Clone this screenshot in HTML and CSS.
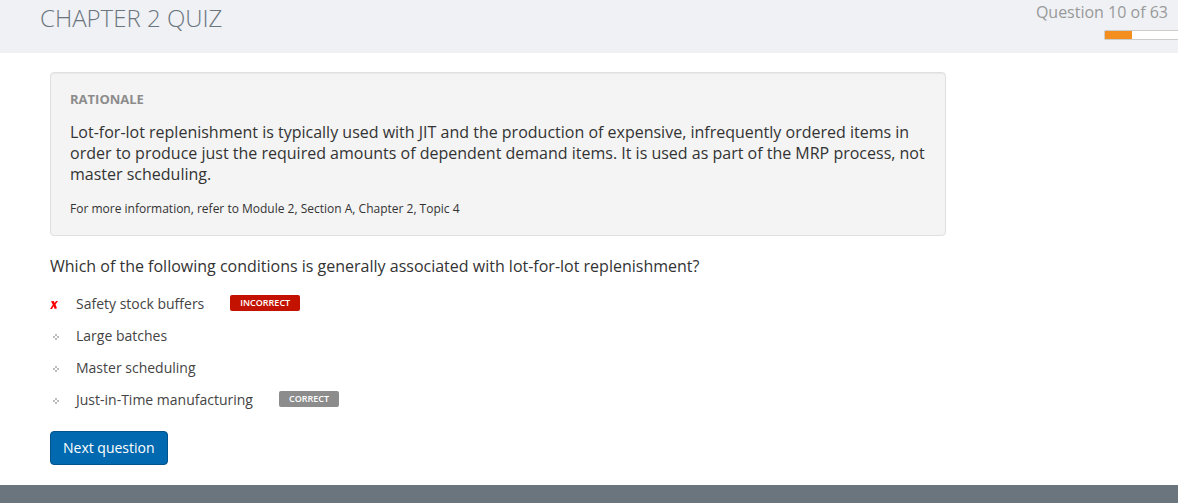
FILE: index.html
```html
<!DOCTYPE html>
<html lang="en">
<head>
<meta charset="utf-8">
<meta name="viewport" content="width=device-width, initial-scale=1">
<title>Chapter 2 Quiz</title>
<link rel="stylesheet" href="styles.css">
</head>
<body>
<header class="quiz-header">
  <h1 class="quiz-title">CHAPTER 2 QUIZ</h1>
  <div class="quiz-status">
    <p class="quiz-count">Question 10 of 63</p>
    <div class="progress" role="progressbar" aria-label="Quiz progress" aria-valuemin="0" aria-valuemax="63" aria-valuenow="10"><div class="progress-fill"></div></div>
  </div>
</header>
<main class="quiz-main">
  <section class="rationale">
    <h2 class="rationale-title">RATIONALE</h2>
    <p class="rationale-text">Lot-for-lot replenishment is typically used with JIT and the production of expensive, infrequently ordered items in order to produce just the required amounts of dependent demand items. It is used as part of the MRP process, not master scheduling.</p>
    <p class="rationale-note">For more information, refer to Module 2, Section A, Chapter 2, Topic 4</p>
  </section>
  <p class="question">Which of the following conditions is generally associated with lot-for-lot replenishment?</p>
  <ul class="answers">
    <li class="answer">
      <svg class="mark" viewBox="0 0 10 10" aria-hidden="true"><path d="M1 2.2 3.8 2 4.7 4 6 2H8L5.5 5.5 7 9.2 4.7 10 3.6 7.3 2 10H0L2.8 5.8Z" fill="#f00"/></svg>
      <span class="answer-text">Safety stock buffers</span>
      <span class="badge badge-incorrect">INCORRECT</span>
    </li>
    <li class="answer">
      <svg class="mark" viewBox="0 0 10 10" aria-hidden="true"><path d="M5 3h2v2H5zM3 5h2v2H3zM7 5h2v2H7zM5 7h2v2H5z" fill="#bbb"/></svg>
      <span class="answer-text">Large batches</span>
    </li>
    <li class="answer">
      <svg class="mark" viewBox="0 0 10 10" aria-hidden="true"><path d="M5 3h2v2H5zM3 5h2v2H3zM7 5h2v2H7zM5 7h2v2H5z" fill="#bbb"/></svg>
      <span class="answer-text">Master scheduling</span>
    </li>
    <li class="answer">
      <svg class="mark" viewBox="0 0 10 10" aria-hidden="true"><path d="M5 3h2v2H5zM3 5h2v2H3zM7 5h2v2H7zM5 7h2v2H5z" fill="#bbb"/></svg>
      <span class="answer-text">Just-in-Time manufacturing</span>
      <span class="badge badge-correct">CORRECT</span>
    </li>
  </ul>
  <button class="next" type="button">Next question</button>
</main>
<footer class="quiz-footer"></footer>
</body>
</html>
```
FILE: styles.css
```css
* { box-sizing: border-box; }

body {
  margin: 0;
  min-height: 100vh;
  display: flex;
  flex-direction: column;
  overflow-x: hidden;
  background: #fff;
  color: #333;
  font: 14px/20px "Open Sans", sans-serif;
}

h1, h2, p, ul { margin: 0; padding: 0; }

.quiz-header {
  display: flex;
  justify-content: space-between;
  align-items: flex-start;
  padding: 2px 0 13px 40px;
  background: #eff1f5;
}

.quiz-title {
  color: #6b757d;
  font-size: 24px;
  font-weight: 300;
  line-height: 32px;
}

.quiz-status {
  display: flex;
  flex-direction: column;
  align-items: flex-end;
  gap: 8px;
}

.quiz-count {
  padding-right: 10px;
  color: #999;
  font-size: 16px;
  line-height: 20px;
}

.progress {
  width: 74px;
  height: 10px;
  border: 1px solid #ccc;
  border-right: 0;
  border-radius: 2px 0 0 2px;
  background: #fff;
}

.progress-fill {
  width: 27px;
  height: 100%;
  background: #f48f1f;
}

.quiz-main {
  flex: 1;
  padding: 19px 50px 20px;
}

.rationale {
  max-width: 896px;
  padding: 16px 19px;
  border: 1px solid #e0e0e0;
  border-radius: 4px;
  background: #f4f4f4;
  box-shadow: inset 0 1px 1px rgba(0, 0, 0, 0.05);
}

.rationale-title {
  margin-bottom: 13px;
  color: #8c8c8c;
  font-size: 13px;
  font-weight: 700;
  line-height: 20px;
}

.rationale-text {
  margin-bottom: 14px;
  font-size: 16px;
  line-height: 21px;
}

.rationale-note {
  font-size: 12px;
  line-height: 20px;
}

.question {
  margin: 20px 0 17px;
  font-size: 16px;
  line-height: 21px;
}

.answers {
  display: flex;
  flex-direction: column;
  gap: 12px;
  list-style: none;
}

.answer {
  display: flex;
  align-items: center;
  color: #444;
}

.mark {
  width: 10px;
  height: 10px;
  margin-right: 16px;
}

.badge {
  margin: 0 0 2px 26px;
  padding: 0 10px;
  border-radius: 2px;
  color: #fff;
  font-size: 9px;
  font-weight: 600;
  line-height: 16px;
}

.badge-incorrect { background: #c41200; }
.badge-correct { background: #8c8c8c; }

.next {
  margin-top: 21px;
  padding: 6px 12px;
  border: 1px solid #00528a;
  border-radius: 4px;
  background: #0069b0;
  color: #fff;
  font: 500 14px/20px "Open Sans", sans-serif;
}

.quiz-footer {
  height: 18px;
  background: #6b757d;
}
```
